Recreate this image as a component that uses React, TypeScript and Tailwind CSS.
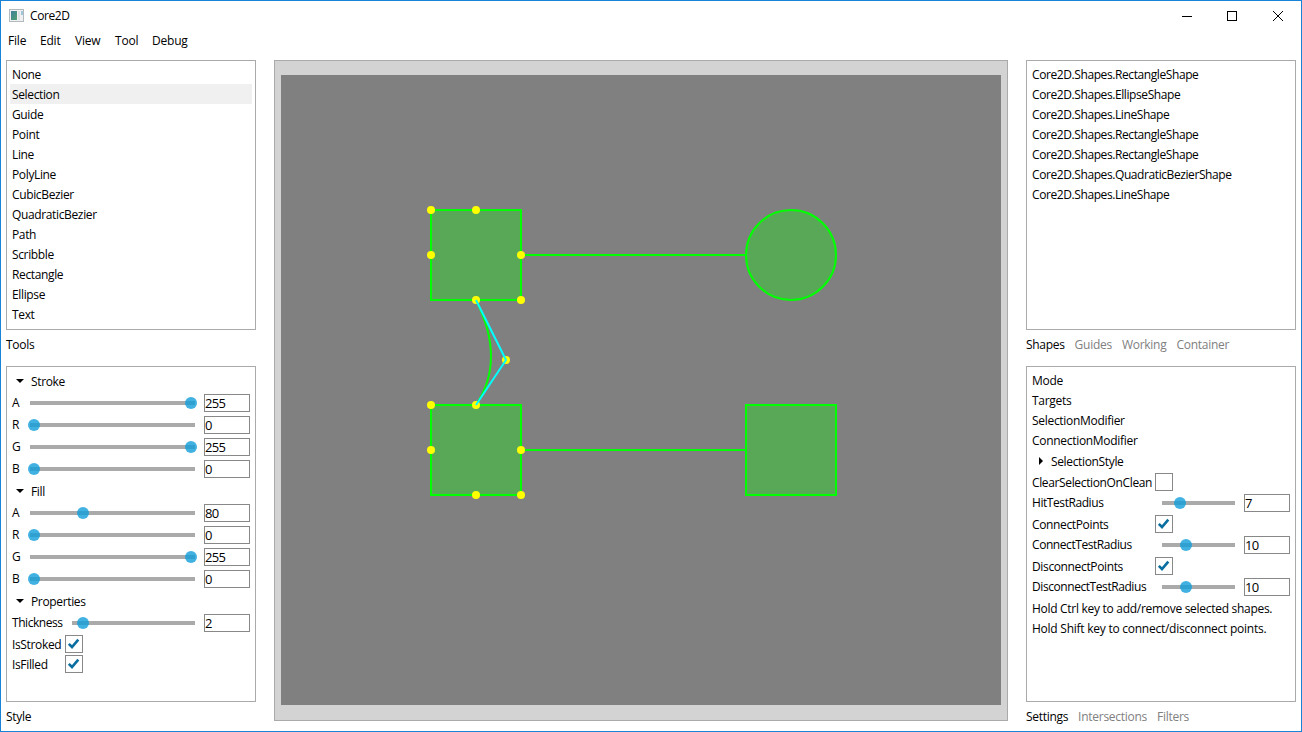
import React from "react";

const tools = ["None", "Selection", "Guide", "Point", "Line", "PolyLine", "CubicBezier", "QuadraticBezier", "Path", "Scribble", "Rectangle", "Ellipse", "Text"];
const shapes = ["Rectangle", "Ellipse", "Line", "Rectangle", "Rectangle", "QuadraticBezier", "Line"];

function Slider({ thumb }: { thumb: number }) {
  return (
    <div className="relative h-1 flex-1 bg-[#aaaaaa]">
      <div className="absolute -top-1 size-3 -translate-x-1/2 rounded-full bg-[#119eda]/80" style={{ left: thumb }} />
    </div>
  );
}

function NumberBox({ value }: { value: number }) {
  return (
    <div className="ml-[9px] h-[18px] w-[46px] border border-[#888888] text-[13px] leading-4 tracking-[-0.7px]">
      {value}
    </div>
  );
}

function CheckBox({ checked }: { checked?: boolean }) {
  return (
    <div className="size-[18px] border border-[#888888]">
      {checked && (
        <svg viewBox="0 0 16 16" className="size-4" fill="none" stroke="#0a6ea0" strokeWidth="2.6">
          <path d="M2.8 7.8 L6 11 L12.3 3.6" />
        </svg>
      )}
    </div>
  );
}

function Expander({ title, closed }: { title: string; closed?: boolean }) {
  return (
    <div className="flex h-[22px] items-center">
      <svg viewBox="0 0 8 8" className={closed ? "ml-[5px] mr-[6px] size-2" : "ml-1 mr-[7px] size-2"}>
        <path d={closed ? "M2 0 L6 4 L2 8 Z" : "M0 2 H8 L4 6 Z"} />
      </svg>
      <span className="pt-px tracking-[-0.35px]">{title}</span>
    </div>
  );
}

function Channel({ name, value, thumb }: { name: string; value: number; thumb: number }) {
  return (
    <div className="flex h-[22px] items-center">
      <span className="w-[18px]">{name}</span>
      <Slider thumb={thumb} />
      <NumberBox value={value} />
    </div>
  );
}

function CheckRow({ name, checked, wide }: { name: string; checked?: boolean; wide?: boolean }) {
  return (
    <div className="flex h-5 items-center">
      <span className={wide ? "w-[123px] pt-px tracking-[-0.36px]" : "w-[53px] pt-px tracking-[-0.35px]"}>{name}</span>
      <CheckBox checked={checked} />
    </div>
  );
}

function RadiusRow({ name, value, thumb }: { name: string; value: number; thumb: number }) {
  return (
    <div className="flex h-[22px] items-center">
      <span className="w-[130px] tracking-[-0.43px]">{name}</span>
      <Slider thumb={thumb} />
      <NumberBox value={value} />
    </div>
  );
}

function Tabs({ items }: { items: string[] }) {
  return (
    <div className="flex h-[30px] items-center gap-[10px]">
      {items.map((t, i) => (
        <span key={t} className={i === 0 ? "tracking-[-0.3px] text-black" : "tracking-[-0.27px] text-[#808080]"}>{t}</span>
      ))}
    </div>
  );
}

function Dots({ points }: { points: number[][] }) {
  return (
    <>
      {points.map(([x, y]) => (
        <circle key={`${x}-${y}`} cx={x} cy={y} r="4" fill="#ffff00" />
      ))}
    </>
  );
}

function Drawing() {
  return (
    <svg width="720" height="630" viewBox="281 75 720 630" className="block bg-[#808080]">
      <g stroke="#00ff00" strokeWidth="2" fill="#58a858">
        <rect x="431" y="210" width="90" height="90" />
        <circle cx="791" cy="255" r="45" />
        <path d="M521 255 H746" />
        <rect x="431" y="405" width="90" height="90" />
        <rect x="746" y="405" width="90" height="90" />
        <path d="M476 300 Q506 360 476 405" fill="none" />
        <path d="M521 450 H746" />
      </g>
      <Dots points={[[431, 210], [476, 210], [431, 255], [521, 255], [476, 300], [521, 300], [506, 360], [431, 405], [476, 405], [431, 450], [521, 450], [476, 495], [521, 495]]} />
      <path d="M476 300 L506 360 L476 405" fill="none" stroke="#00ffff" strokeWidth="2" />
    </svg>
  );
}

export default function App() {
  return (
    <div className="flex h-[732px] w-[1302px] flex-col border border-[#1883d7] bg-white font-['Open_Sans','Noto_Sans',sans-serif] text-[12px] leading-5 tracking-[-0.3px] whitespace-nowrap text-black">
      <header className="flex h-[30px] shrink-0 items-center pl-2">
        <svg width="16" height="16" viewBox="0 0 16 16">
          <defs>
            <linearGradient id="pane" x1="0" y1="0" x2="1" y2="1">
              <stop offset="0" stopColor="#3f7f9c" />
              <stop offset="1" stopColor="#4fa070" />
            </linearGradient>
          </defs>
          <rect x="0.5" y="1.5" width="14" height="12" fill="#eef0f2" stroke="#b4b9bd" />
          <rect x="2" y="3" width="6" height="9" fill="url(#pane)" />
          <rect x="9" y="3" width="2" height="9" fill="#dfe3e6" />
          <rect x="12" y="3" width="2" height="4" fill="#9fc6d8" />
        </svg>
        <h1 className="ml-[5px] grow tracking-[-0.4px]">Core2D</h1>
        <svg width="102" height="12" viewBox="0 0 102 12" className="mr-[17px]" fill="none" stroke="#000" shapeRendering="crispEdges">
          <path d="M0 6.5 H10" />
          <rect x="45.5" y="1.5" width="9" height="9" />
          <path d="M91 1 L101 11 M101 1 L91 11" shapeRendering="auto" />
        </svg>
      </header>
      <nav className="flex h-5 shrink-0 items-center pl-[7px] tracking-[-0.2px]">
        <span className="w-8">File</span>
        <span className="w-[35px]">Edit</span>
        <span className="w-10">View</span>
        <span className="w-[37px]">Tool</span>
        <span>Debug</span>
      </nav>
      <main className="mt-[9px] flex">
        <aside className="ml-[5px] w-[250px]">
          <ul className="h-[270px] border border-[#aaaaaa] p-[3px] tracking-[-0.36px]">
            {tools.map((t) => (
              <li key={t} className={t === "Selection" ? "h-5 bg-[#f0f0f0] pt-px pl-0.5" : "h-5 pt-px pl-0.5"}>{t}</li>
            ))}
          </ul>
          <Tabs items={["Tools"]} />
          <section className="mt-[6px] h-[336px] border border-[#aaaaaa] px-[5px] py-[3px]">
            <Expander title="Stroke" />
            <Channel name="A" value={255} thumb={161} />
            <Channel name="R" value={0} thumb={4} />
            <Channel name="G" value={255} thumb={161} />
            <Channel name="B" value={0} thumb={4} />
            <Expander title="Fill" />
            <Channel name="A" value={80} thumb={53} />
            <Channel name="R" value={0} thumb={4} />
            <Channel name="G" value={255} thumb={161} />
            <Channel name="B" value={0} thumb={4} />
            <Expander title="Properties" />
            <div className="flex h-[22px] items-center">
              <span className="w-[60px] tracking-[-0.45px]">Thickness</span>
              <Slider thumb={11} />
              <NumberBox value={2} />
            </div>
            <CheckRow name="IsStroked" checked />
            <CheckRow name="IsFilled" checked />
          </section>
          <Tabs items={["Style"]} />
        </aside>
        <section className="ml-[18px] h-[661px] w-[734px] border border-[#aaaaaa] bg-[#d3d3d3] pt-[14px] pl-[6px]">
          <Drawing />
        </section>
        <aside className="ml-[18px] w-[270px]">
          <ul className="h-[270px] border border-[#aaaaaa] p-[3px] tracking-[-0.41px]">
            {shapes.map((s, i) => <li key={i} className="h-5 pt-px pl-0.5">Core2D.Shapes.{s}Shape</li>)}
          </ul>
          <Tabs items={["Shapes", "Guides", "Working", "Container"]} />
          <section className="mt-[6px] h-[336px] border border-[#aaaaaa] px-[5px] py-[3px]">
            {["Mode", "Targets", "SelectionModifier", "ConnectionModifier"].map((t) => <p key={t} className="h-5 pt-px">{t}</p>)}
            <Expander title="SelectionStyle" closed />
            <CheckRow name="ClearSelectionOnClean" wide />
            <RadiusRow name="HitTestRadius" value={7} thumb={18} />
            <CheckRow name="ConnectPoints" checked wide />
            <RadiusRow name="ConnectTestRadius" value={10} thumb={24} />
            <CheckRow name="DisconnectPoints" checked wide />
            <RadiusRow name="DisconnectTestRadius" value={10} thumb={24} />
            <p className="h-5 pt-px tracking-[-0.29px]">Hold Ctrl key to add/remove selected shapes.</p>
            <p className="h-5 pt-px tracking-[-0.25px]">Hold Shift key to connect/disconnect points.</p>
          </section>
          <Tabs items={["Settings", "Intersections", "Filters"]} />
        </aside>
      </main>
    </div>
  );
}
